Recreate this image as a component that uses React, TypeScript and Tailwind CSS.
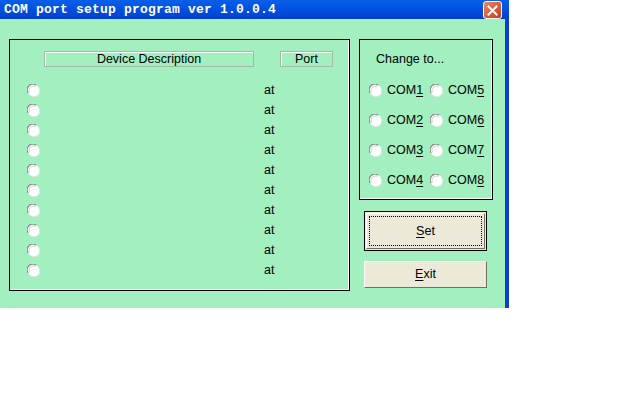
import React from 'react';

const Radio: React.FC = () => (
  <svg width="13" height="13" viewBox="0 0 13 13" className="shrink-0">
    <circle cx="6.5" cy="6.5" r="6" fill="#ffffff" />
    <path d="M1.2 9 A5.6 5.6 0 0 1 9 1.2" fill="none" stroke="#8a8a8a" strokeWidth="1.2" />
    <path d="M2.4 8.2 A4.4 4.4 0 0 1 8.2 2.4" fill="none" stroke="#d0d0d0" strokeWidth="1" />
    <path d="M11.8 4 A5.6 5.6 0 0 1 4 11.8" fill="none" stroke="#e6e6e6" strokeWidth="1" />
  </svg>
);

const ComOption: React.FC<{ n: number }> = ({ n }) => (
  <div className="flex items-center gap-[5px] w-[61px]">
    <Radio />
    <span>
      COM<span className="underline underline-offset-2">{n}</span>
    </span>
  </div>
);

const App: React.FC = () => {
  const rows = Array.from({ length: 10 }, (_, i) => i);
  const pairs = [
    [1, 5],
    [2, 6],
    [3, 7],
    [4, 8],
  ];

  return (
    <div className="w-[640px] h-[400px] bg-white overflow-hidden" style={{ fontFamily: '"Liberation Sans", Arial, sans-serif' }}>
      <div className="w-[509px] h-[308px] flex flex-col">
        {/* title bar */}
        <div className="h-[19px] flex items-center justify-between bg-gradient-to-b from-[#0a5fe8] via-[#0050e0] to-[#0340c8] pr-[7px]">
          <span
            className="pl-[4px] text-white font-bold text-[13px] leading-none tracking-[0.2px]"
            style={{ fontFamily: '"Liberation Mono", "DejaVu Sans Mono", monospace' }}
          >
            COM port setup program ver 1.0.0.4
          </span>
          <div className="w-[19px] h-[18px] mt-[1px] rounded-[3px] border border-white bg-gradient-to-br from-[#e8866a] to-[#c43c18] flex items-center justify-center">
            <svg width="11" height="11" viewBox="0 0 11 11">
              <path d="M1.5 1.5 L9.5 9.5 M9.5 1.5 L1.5 9.5" stroke="#ffffff" strokeWidth="2" strokeLinecap="square" />
            </svg>
          </div>
        </div>

        {/* client */}
        <div className="flex-1 flex bg-[#a2efbf] border-r-[4px] border-[#0a3fd0] pl-[9px] pt-[20px] text-[12.5px] text-black">
          {/* device list group */}
          <div className="w-[341px] h-[252px] border border-black shadow-[inset_-1px_-1px_0_#ffffff] flex flex-col">
            <div className="flex mt-[11px] h-[16px]">
              <div className="ml-[34px] w-[210px] border border-[#a8b8a8] shadow-[inset_1px_1px_0_#ffffff] flex items-center justify-center leading-none">
                Device Description
              </div>
              <div className="ml-[26px] w-[53px] border border-[#a8b8a8] shadow-[inset_1px_1px_0_#ffffff] flex items-center justify-center leading-none">
                Port
              </div>
            </div>
            <div className="flex flex-col mt-[13px]">
              {rows.map((r) => (
                <div key={r} className="h-[20px] flex items-center">
                  <div className="ml-[17px]">
                    <Radio />
                  </div>
                  <span className="ml-[224px] leading-none">at</span>
                </div>
              ))}
            </div>
          </div>

          {/* right column */}
          <div className="ml-[9px] flex flex-col">
            <div className="w-[134px] h-[161px] border border-black shadow-[inset_-1px_-1px_0_#ffffff] flex flex-col pl-[9px]">
              <div className="mt-[13px] ml-[7px] leading-none">Change to...</div>
              <div className="flex flex-col mt-[10px]">
                {pairs.map(([a, b]) => (
                  <div key={a} className="h-[30px] flex items-center">
                    <ComOption n={a} />
                    <ComOption n={b} />
                  </div>
                ))}
              </div>
            </div>

            <button className="mt-[11px] ml-[5px] w-[123px] h-[40px] border border-black bg-[#ece9d8] p-[1px]">
              <div className="w-full h-full border border-[#ffffff] border-r-[#716f64] border-b-[#716f64] p-[2px]">
                <div className="w-full h-full border border-dotted border-black flex items-center justify-center">
                  <span>
                    <span className="underline underline-offset-2">S</span>et
                  </span>
                </div>
              </div>
            </button>

            <button className="mt-[10px] ml-[5px] w-[123px] h-[27px] bg-[#ece9d8] border border-[#ffffff] border-r-[#716f64] border-b-[#716f64] flex items-center justify-center">
              <span>
                <span className="underline underline-offset-2">E</span>xit
              </span>
            </button>
          </div>
        </div>
      </div>
    </div>
  );
};

export default App;
